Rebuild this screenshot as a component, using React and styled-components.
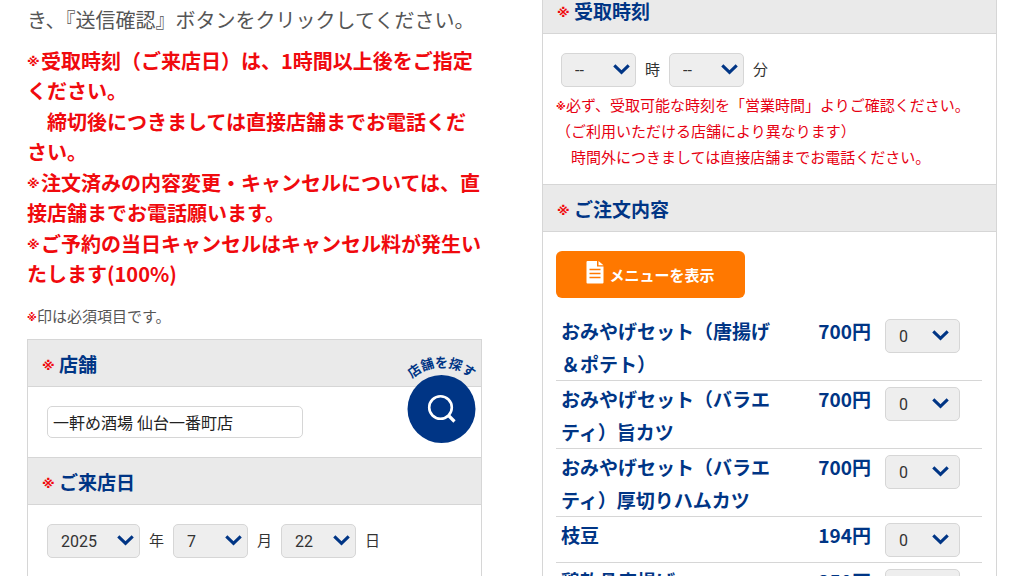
import React from "react";
import styled, { createGlobalStyle } from "styled-components";

const navy = "#003585";
const red = "#f00a0e";
const line = "#d6d6d6";

const GlobalStyle = createGlobalStyle`
  * {
    box-sizing: border-box;
  }
  body {
    margin: 0;
    background: #fff;
    color: #333;
    font-family: "Noto Sans CJK JP", sans-serif;
    font-size: 15px;
  }
  p, h2, ul {
    margin: 0;
    padding: 0;
  }
`;

const Page = styled.main`
  display: grid;
  grid-template-columns: 1fr 1fr;
  gap: 60px;
  height: 100vh;
  padding: 0 27px;
  overflow: hidden;
`;

const Column = styled.div`
  display: flex;
  flex-direction: column;
  min-width: 0;
`;

const Lead = styled.p`
  margin-top: 5px;
  color: #555;
  font-size: 20px;
  line-height: 30px;
`;

const Warnings = styled.div`
  display: flex;
  flex-direction: column;
  gap: 1px;
  margin: 11px 0 15px;
  color: ${red};
  font-size: 20px;
  font-weight: 700;
  line-height: 30px;
`;

const Mark = styled.span`
  display: inline-block;
  width: ${({ $small }) => ($small ? 10 : 14)}px;
  color: ${red};
  font-family: "DejaVu Sans", sans-serif;
  font-size: ${({ $small }) => ($small ? 10 : 13)}px;
  font-weight: 700;
  line-height: 1;
  vertical-align: ${({ $small }) => ($small ? 1 : 3)}px;
`;

const Required = styled.p`
  margin-bottom: 11px;
  color: #555;
  line-height: 24px;
`;

const Form = styled.form`
  flex: 1 0 auto;
  border: 1px solid ${line};
  border-width: 0 1px;
`;

const FormScrolled = styled(Form)`
  margin-top: -14px;
`;

const Section = styled.section`
  position: relative;
`;

const SectionTitle = styled.h2`
  display: flex;
  align-items: center;
  gap: 3px;
  height: 48px;
  padding: 0 14px;
  border: 1px solid ${line};
  border-width: 1px 0;
  background: #eaeaea;
  color: ${navy};
  font-size: 19px;
  font-weight: 700;

  ${Mark} {
    padding-top: 5px;
  }
`;

const SectionBody = styled.div`
  padding: 19px 14px 14px 13px;
`;

const ShopBody = styled.div`
  padding: 19px;
`;

const ShopInput = styled.input`
  display: block;
  width: 256px;
  height: 32px;
  padding: 0 5px;
  border: 1px solid ${line};
  border-radius: 5px;
  background: #fff;
  color: #222;
  font-family: Roboto, "Noto Sans CJK JP", sans-serif;
  font-size: 16px;
`;

const ShopSearch = styled.a`
  position: absolute;
  top: 12px;
  right: 0;
  width: 80px;
  height: 96px;
`;

const Fields = styled.div`
  display: flex;
  align-items: center;
  gap: 9px;
  margin-left: ${({ $indent }) => ($indent ? 5 : 0)}px;
`;

const FieldLabel = styled.label`
  padding-bottom: 3px;
`;

const SelectBox = styled.span`
  position: relative;
  flex: none;
  width: ${({ $wide }) => ($wide ? 93 : 75)}px;
  height: 34px;

  svg {
    position: absolute;
    top: 10px;
    right: 6px;
    pointer-events: none;
  }
`;

const SelectInput = styled.select`
  display: block;
  width: 100%;
  height: 100%;
  padding: 0 13px;
  appearance: none;
  border: 1px solid ${line};
  border-radius: 5px;
  background: #eee;
  color: #333;
  font-family: Roboto, sans-serif;
  font-size: 16px;
`;

const TimeNotes = styled.div`
  margin-top: 5px;
  color: #e60012;
  line-height: 26px;
`;

const MenuButton = styled.button`
  display: flex;
  align-items: center;
  justify-content: center;
  gap: 5px;
  width: 189px;
  height: 47px;
  margin-bottom: 15px;
  padding: 0;
  border: 0;
  border-radius: 6px;
  background: #ff7800;
  color: #fff;
  font-family: inherit;
  font-size: 15px;
  font-weight: 700;

  svg {
    margin-bottom: 4px;
  }
`;

const MenuList = styled.ul`
  list-style: none;
`;

const MenuRow = styled.li`
  display: flex;
  align-items: flex-start;
  padding: 1px 22px 0 5px;
  border-bottom: 1px solid ${line};
  color: ${navy};
  font-size: 19px;
  font-weight: 700;
  line-height: 33px;

  ${SelectBox} {
    margin: 5px 0;
  }
  svg {
    right: 11px;
  }
`;

const MenuName = styled.label`
  flex: 1;
`;

const MenuPrice = styled.span`
  width: 90px;
  margin-right: 14px;
  text-align: right;
`;

const Chevron = () => (
  <svg width="17" height="12" viewBox="0 0 17 12" fill="none" aria-hidden="true">
    <path d="M1.3 2.3 8.5 9.3 15.7 2.3" stroke={navy} strokeWidth="3.1" />
  </svg>
);

const Select = ({ id, label, options, wide }) => (
  <SelectBox $wide={wide}>
    <SelectInput id={id} aria-label={label}>
      {options.map((option) => (
        <option key={option}>{option}</option>
      ))}
    </SelectInput>
    <Chevron />
  </SelectBox>
);

const DocumentIcon = () => (
  <svg width="18" height="23" viewBox="0 0 18 23" aria-hidden="true">
    <path
      fill="#fff"
      d="M1.5 0H11v5.5h6.500V21.500a1 1 0 0 1-1 1h-15a1 1 0 0 1-1-1V1a1 1 0 0 1 1-1zM12.500 0 17.500 4.300h-5z"
    />
    <path d="M3.5 8.5h11M3.5 12.5h11M3.5 16.5h11" stroke="#ff7800" strokeWidth="1.3" />
  </svg>
);

const SearchBadge = () => (
  <svg width="80" height="96" viewBox="0 0 80 96">
    <path id="arc" d="M-1.5 58A42 42 0 0 1 82.5 58" fill="none" />
    <text fill={navy} fontSize="13" fontWeight="700" textAnchor="middle">
      <textPath href="#arc" startOffset="50%">
        店舗を探す
      </textPath>
    </text>
    <circle cx="40.5" cy="58" r="34" fill={navy} />
    <g fill="none" stroke="#fff" strokeWidth="2.6">
      <circle cx="39.5" cy="56.5" r="11.3" />
      <path d="M47.500 64.500 53.500 70.500" strokeWidth="3.2" />
    </g>
  </svg>
);

const menus = [
  { name: "おみやげセット（唐揚げ＆ポテト）", price: 700 },
  { name: "おみやげセット（バラエティ）旨カツ", price: 700 },
  { name: "おみやげセット（バラエティ）厚切りハムカツ", price: 700 },
  { name: "枝豆", price: 194 },
  { name: "鶏軟骨唐揚げ", price: 350 },
];

const Title = ({ children }) => (
  <SectionTitle>
    <Mark>※</Mark>
    {children}
  </SectionTitle>
);

const App = () => {
  return (
    <>
      <GlobalStyle />
      <Page>
        <Column>
          <Lead>き、『送信確認』ボタンをクリックしてください。</Lead>
          <Warnings>
            <p>
              <Mark>※</Mark>受取時刻（ご来店日）は、1時間以上後をご指定ください。
            </p>
            <p>　締切後につきましては直接店舗までお電話ください。</p>
            <p>
              <Mark>※</Mark>注文済みの内容変更・キャンセルについては、直接店舗までお電話願います。
            </p>
            <p>
              <Mark>※</Mark>ご予約の当日キャンセルはキャンセル料が発生いたします(100%)
            </p>
          </Warnings>
          <Required>
            <Mark $small>※</Mark>印は必須項目です。
          </Required>
          <Form>
            <Section>
              <Title>
                <label htmlFor="shop">店舗</label>
              </Title>
              <ShopBody>
                <ShopInput id="shop" defaultValue="一軒め酒場 仙台一番町店" />
              </ShopBody>
              <ShopSearch href="#shop">
                <SearchBadge />
              </ShopSearch>
            </Section>
            <Section>
              <Title>ご来店日</Title>
              <ShopBody>
                <Fields>
                  <Select id="year" options={["2025", "2026"]} wide />
                  <FieldLabel htmlFor="year">年</FieldLabel>
                  <Select id="month" options={["7", "8"]} />
                  <FieldLabel htmlFor="month">月</FieldLabel>
                  <Select id="day" options={["22", "23"]} />
                  <FieldLabel htmlFor="day">日</FieldLabel>
                </Fields>
              </ShopBody>
            </Section>
          </Form>
        </Column>
        <Column>
          <FormScrolled>
            <Section>
              <Title>受取時刻</Title>
              <SectionBody>
                <Fields $indent>
                  <Select id="hour" options={["--"]} />
                  <FieldLabel htmlFor="hour">時</FieldLabel>
                  <Select id="minute" options={["--"]} />
                  <FieldLabel htmlFor="minute">分</FieldLabel>
                </Fields>
                <TimeNotes>
                  <p>
                    <Mark $small>※</Mark>必ず、受取可能な時刻を「営業時間」よりご確認ください。
                  </p>
                  <p>（ご利用いただける店舗により異なります）</p>
                  <p>　時間外につきましては直接店舗までお電話ください。</p>
                </TimeNotes>
              </SectionBody>
            </Section>
            <Section>
              <Title>ご注文内容</Title>
              <SectionBody>
                <MenuButton type="button">
                  <DocumentIcon />
                  メニューを表示
                </MenuButton>
                <MenuList>
                  {menus.map(({ name, price }, i) => (
                    <MenuRow key={name}>
                      <MenuName htmlFor={`menu${i}`}>{name}</MenuName>
                      <MenuPrice>{price}円</MenuPrice>
                      <Select id={`menu${i}`} options={["0", "1", "2", "3"]} />
                    </MenuRow>
                  ))}
                </MenuList>
              </SectionBody>
            </Section>
          </FormScrolled>
        </Column>
      </Page>
    </>
  );
};

export default App;
